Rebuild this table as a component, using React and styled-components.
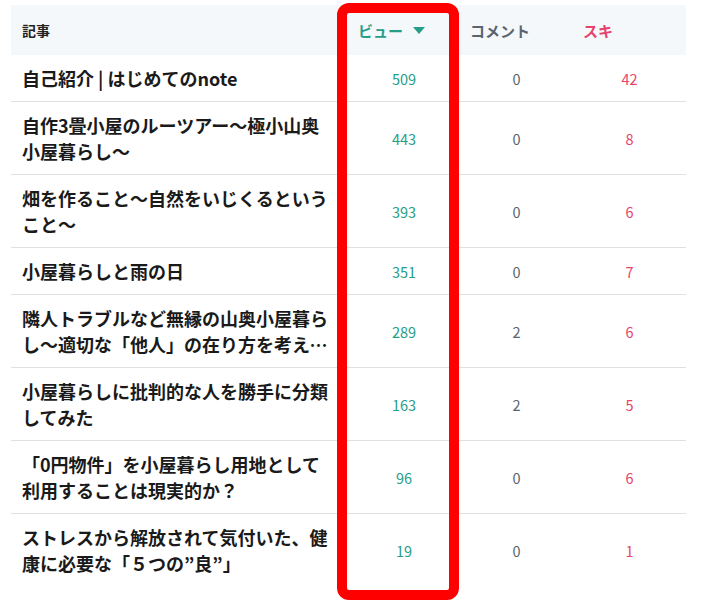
import React from 'react'
import styled, { createGlobalStyle } from 'styled-components'

const GlobalStyle = createGlobalStyle`
    body {
        margin: 0;
        background: #fff;
        font-family: "Noto Sans CJK JP", "Noto Sans", sans-serif;
    }
`

const teal = "#249e89"
const gray = "#5a6570"
const pink = "#e8436a"

const articles = [
    { title: "自己紹介 | はじめてのnote", views: 509, comments: 0, likes: 42 },
    { title: "自作3畳小屋のルーツアー～極小山奥小屋暮らし～", views: 443, comments: 0, likes: 8 },
    { title: "畑を作ること～自然をいじくるということ～", views: 393, comments: 0, likes: 6 },
    { title: "小屋暮らしと雨の日", views: 351, comments: 0, likes: 7 },
    { title: "隣人トラブルなど無縁の山奥小屋暮らし～適切な「他人」の在り方を考える～", views: 289, comments: 2, likes: 6 },
    { title: "小屋暮らしに批判的な人を勝手に分類してみた", views: 163, comments: 2, likes: 5 },
    { title: "「0円物件」を小屋暮らし用地として利用することは現実的か？", views: 96, comments: 0, likes: 6 },
    { title: "ストレスから解放されて気付いた、健康に必要な「５つの”良”」", views: 19, comments: 0, likes: 1 },
]

const Page = styled.div`
    box-sizing: border-box;
    min-height: 612px;
    padding: 5px 33px 0 11px;
`

const Table = styled.div`
    position: relative;
    width: 675px;
    padding-bottom: 14px;
`

const Row = styled.div`
    display: grid;
    grid-template-columns: 337px 112px 113px 113px;
    align-items: center;
    border-bottom: 1px solid ${p => p.$last ? "transparent" : "#e0e0e0"};
`

const HeadRow = styled(Row)`
    height: 50px;
    background: #f5f8fa;
    border-bottom: none;
`

const HeadCell = styled.div`
    display: flex;
    align-items: center;
    gap: 10px;
    padding-left: ${p => p.$first ? "11px" : "10px"};
    font-size: ${p => p.$first ? "14px" : "15px"};
    font-weight: 700;
    color: ${p => p.$color || "#222"};
`

const Title = styled.div`
    padding: 10px 11px;
    font-size: 18px;
    line-height: 26px;
    font-weight: 700;
    color: #1a1a1a;
    display: -webkit-box;
    -webkit-line-clamp: 2;
    -webkit-box-orient: vertical;
    overflow: hidden;
`

const Num = styled.div`
    text-align: center;
    font-size: 14.5px;
    color: ${p => p.$color};
`

const Highlight = styled.div`
    position: absolute;
    left: 326px;
    top: -2px;
    width: 122px;
    height: 597px;
    box-sizing: border-box;
    border: 10px solid #ff0000;
    border-radius: 12px;
    pointer-events: none;
`

function SortArrow() {
    return (
        <svg width="12" height="7" viewBox="0 0 12 7">
            <path d="M0 0 H12 L6 7 Z" fill={teal} />
        </svg>
    )
}

export default function App() {
    return (
        <Page>
            <GlobalStyle />
            <Table>
                <HeadRow>
                    <HeadCell $first>記事</HeadCell>
                    <HeadCell $color={teal}>ビュー<SortArrow /></HeadCell>
                    <HeadCell $color={gray}>コメント</HeadCell>
                    <HeadCell $color={pink}>スキ</HeadCell>
                </HeadRow>
                {articles.map((a, i) => (
                    <Row key={i} $last={i === articles.length - 1}>
                        <Title>{a.title}</Title>
                        <Num $color={teal}>{a.views}</Num>
                        <Num $color={gray}>{a.comments}</Num>
                        <Num $color={pink}>{a.likes}</Num>
                    </Row>
                ))}
                <Highlight />
            </Table>
        </Page>
    )
}
